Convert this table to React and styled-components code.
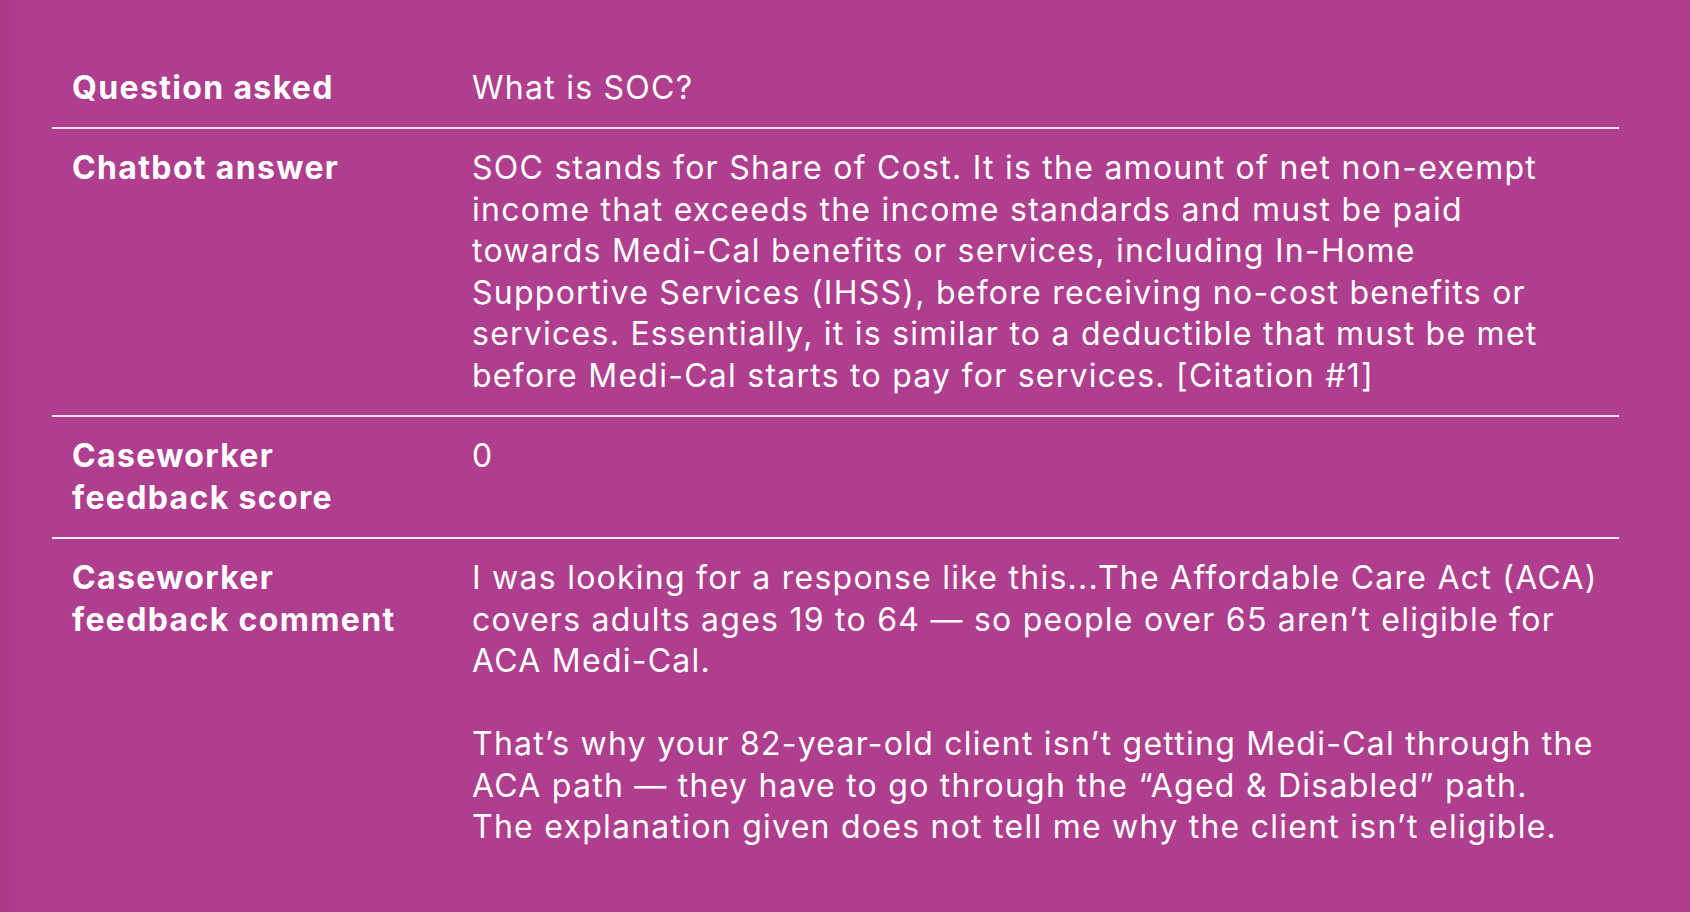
import React from 'react';
import styled, { createGlobalStyle } from 'styled-components';

const GlobalStyle = createGlobalStyle`
  html, body {
    margin: 0;
    padding: 0;
    background: #b03e8e;
  }
  body {
    font-family: Inter, "Noto Sans", sans-serif;
    -webkit-font-smoothing: antialiased;
  }
`;

const Page = styled.main`
  min-height: 912px;
  box-sizing: border-box;
  padding: 48px 71px 0 52px;
  background:
    linear-gradient(90deg, rgba(60, 0, 40, 0.07) 0, rgba(60, 0, 40, 0) 28px),
    #b03e8e;
  color: #ffffff;
`;

const Table = styled.section`
  display: flex;
  flex-direction: column;
`;

const Row = styled.div`
  display: grid;
  grid-template-columns: 420px 1fr;
  padding: 18.5px 0;
  border-top: ${({ $first }) => ($first ? 'none' : '2px solid #f6eaf2')};
`;

const Label = styled.div`
  padding-left: 20px;
  font-size: 32px;
  font-weight: 700;
  line-height: 41.5px;
  letter-spacing: 1.35px;
`;

const Value = styled.div`
  font-size: 32px;
  font-weight: 400;
  line-height: 41.5px;
  letter-spacing: 1.25px;
  white-space: nowrap;

  p {
    margin: 0;
  }

  p + p {
    margin-top: 41.5px;
  }
`;

const rows = [
  {
    label: ['Question asked'],
    value: [['What is SOC?']],
  },
  {
    label: ['Chatbot answer'],
    value: [
      [
        'SOC stands for Share of Cost. It is the amount of net non-exempt',
        'income that exceeds the income standards and must be paid',
        'towards Medi-Cal benefits or services, including In-Home',
        'Supportive Services (IHSS), before receiving no-cost benefits or',
        'services. Essentially, it is similar to a deductible that must be met',
        'before Medi-Cal starts to pay for services. [Citation #1]',
      ],
    ],
  },
  {
    label: ['Caseworker', 'feedback score'],
    value: [['0']],
  },
  {
    label: ['Caseworker', 'feedback comment'],
    value: [
      [
        'I was looking for a response like this...The Affordable Care Act (ACA)',
        'covers adults ages 19 to 64 \u2014 so people over 65 aren\u2019t eligible for',
        'ACA Medi-Cal.',
      ],
      [
        'That\u2019s why your 82-year-old client isn\u2019t getting Medi-Cal through the',
        'ACA path \u2014 they have to go through the \u201cAged & Disabled\u201d path.',
        'The explanation given does not tell me why the client isn\u2019t eligible.',
      ],
    ],
  },
];

const withBreaks = (lines) =>
  lines.map((line, i) => (
    <React.Fragment key={i}>
      {i > 0 && <br />}
      {line}
    </React.Fragment>
  ));

const App = () => (
  <>
    <GlobalStyle />
    <Page>
      <Table>
        {rows.map((row, index) => (
          <Row key={index} $first={index === 0}>
            <Label>{withBreaks(row.label)}</Label>
            <Value>
              {row.value.map((para, i) => (
                <p key={i}>{withBreaks(para)}</p>
              ))}
            </Value>
          </Row>
        ))}
      </Table>
    </Page>
  </>
);

export default App;
